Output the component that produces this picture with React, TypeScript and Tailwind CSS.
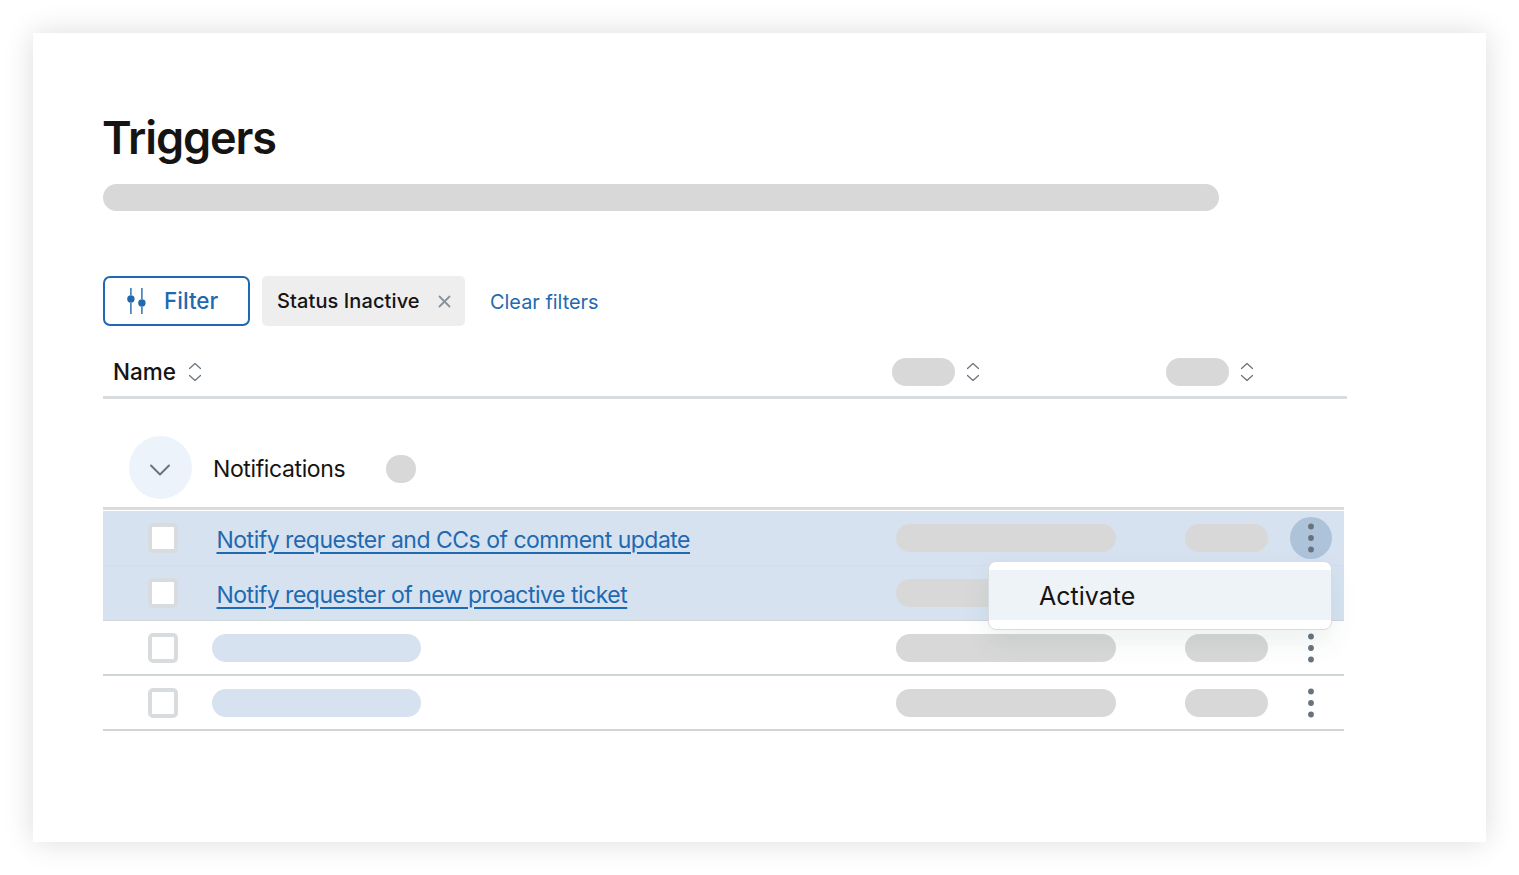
const FONT = "font-['Inter','Liberation_Sans',sans-serif]";

function Sort() {
  return (
    <svg width="16" height="22" viewBox="0 0 16 22" fill="none" stroke="#68737d" strokeWidth="1.2" strokeLinecap="round" strokeLinejoin="round">
      <path d="M2.5 7.5 8 2.5l5.5 5" />
      <path d="M2.5 14.5 8 19.5l5.5-5" />
    </svg>
  );
}

function Pill({ className }: { className: string }) {
  return <div className={`h-[28px] rounded-full bg-[#d8d8d8] ${className}`} />;
}

function Dots() {
  return (
    <svg width="8" height="30" viewBox="0 0 8 30" fill="#68737d">
      <circle cx="4" cy="3.5" r="2.9" />
      <circle cx="4" cy="15" r="2.9" />
      <circle cx="4" cy="26.5" r="2.9" />
    </svg>
  );
}

function Check() {
  return <div className="ml-[45px] h-[30px] w-[30px] shrink-0 rounded-[5px] border-4 border-[#d8dcde] bg-white" />;
}

function Row({ label, selected, active, last }: { label?: string; selected?: boolean; active?: boolean; last?: boolean }) {
  return (
    <div className={`flex h-[55px] items-center border-b ${selected ? "bg-[#d6e2f0]" : "bg-white"} ${selected && !last ? "border-[#d8dcde]" : "border-[#d0d5d8]"} ${!selected ? "border-b-2" : ""}`}>
      <Check />
      {label ? (
        <a className="ml-[39px] mt-[3px] w-[679px] -translate-x-[0.5px] text-[23px] leading-[30px] tracking-[-0.5px] text-[#1f69b0] underline decoration-[2px] underline-offset-[4px]">{label}</a>
      ) : (
        <div className="ml-[34px] w-[684px]">
          <div className="h-[28px] w-[209px] rounded-full bg-[#d6e2f0]" />
        </div>
      )}
      <Pill className="w-[220px]" />
      <Pill className="ml-[69px] w-[83px]" />
      <div className={`ml-[22px] flex h-[42px] w-[42px] items-center justify-center rounded-full ${active ? "bg-[#adc3da]" : ""}`}>
        <Dots />
      </div>
    </div>
  );
}

export default function App() {
  return (
    <div className={`${FONT} h-[875px] w-[1519px] overflow-hidden bg-white p-[33px] text-[#161412]`}>
      <div className="h-[809px] w-[1453px] bg-white pl-[70px] pt-[75px] shadow-[0_0_28px_rgba(0,0,0,0.14)]">
        <h1 className="-ml-[1px] h-[60px] text-[45px] font-semibold leading-[60px] tracking-[-1.1px]">Triggers</h1>
        <div className="mt-[16px] h-[27px] w-[1116px] rounded-full bg-[#d8d8d8]" />

        <div className="mt-[65px] flex h-[50px] items-center">
          <button className="flex h-[50px] w-[147px] items-center rounded-[7px] border-2 border-[#1f69b0] pl-[21px] text-[#1f69b0]">
            <svg width="22" height="26" viewBox="0 0 22 26" fill="#1f69b0">
              <rect x="4.2" y="0" width="1.4" height="7" />
              <rect x="4.2" y="15" width="1.4" height="11" />
              <circle cx="4.9" cy="11" r="3.7" />
              <rect x="15.2" y="0" width="1.4" height="11" />
              <rect x="15.2" y="19" width="1.4" height="7" />
              <circle cx="15.9" cy="15" r="3.7" />
            </svg>
            <span className="ml-[16px] mt-[1px] text-[22.5px] font-medium leading-none">Filter</span>
          </button>
          <div className="ml-[12px] flex h-[50px] w-[203px] items-center rounded-[5px] bg-[#eeeeee] pl-[15px]">
            <span className="text-[20px] font-medium leading-none tracking-[0.1px]">Status Inactive</span>
            <svg className="ml-[18px]" width="13" height="13" viewBox="0 0 13 13" stroke="#87929d" strokeWidth="1.8" strokeLinecap="round">
              <path d="M1.5 1.5l10 10M11.5 1.5l-10 10" />
            </svg>
          </div>
          <a className="ml-[25px] mt-[3px] text-[19.9px] leading-none text-[#1f69b0]">Clear filters</a>
        </div>

        <div className="mt-[21px] flex h-[52px] w-[1244px] items-center border-b-[3px] border-[#d8dcde]">
          <div className="flex w-[789px] items-center">
            <span className="ml-[10px] mt-[1px] text-[22.5px] font-medium leading-none">Name</span>
            <div className="ml-[11px]"><Sort /></div>
          </div>
          <div className="flex w-[274px] items-center">
            <div className="h-[28px] w-[63px] rounded-full bg-[#d8d8d8]" />
            <div className="ml-[10px]"><Sort /></div>
          </div>
          <div className="h-[28px] w-[63px] rounded-full bg-[#d8d8d8]" />
          <div className="ml-[10px]"><Sort /></div>
        </div>

        <div className="w-[1241px]">
          <div className="flex h-[111px] items-center border-b-[3px] border-[#d8dcde] pb-[8px] pt-[37px]">
            <div className="ml-[26px] flex h-[63px] w-[63px] items-center justify-center rounded-full bg-[#edf3fa]">
              <svg width="22" height="14" viewBox="0 0 22 14" fill="none" stroke="#68737d" strokeWidth="2" strokeLinecap="round" strokeLinejoin="round" className="mr-[2px] mt-[5px]">
                <path d="M2 2.5l9 9 9-9" />
              </svg>
            </div>
            <span className="ml-[21px] mt-[4px] text-[23px] leading-none tracking-[-0.38px]">Notifications</span>
            <div className="ml-[41px] mt-[3px] h-[28px] w-[30px] rounded-full bg-[#d8d8d8]" />
          </div>

          <div className="relative mt-[1px]">
            <Row label="Notify requester and CCs of comment update" selected active />
            <Row label="Notify requester of new proactive ticket" selected last />
            <Row />
            <Row />
            <div className="absolute left-[885px] top-[50px] h-[69px] w-[344px] rounded-[8px] border border-[#d8dcde] bg-white py-[8px] shadow-[0_12px_28px_rgba(23,73,77,0.08)]">
              <div className="flex h-[50px] items-center bg-[#eef3f8] pl-[50px] pt-[3px] text-[25px] leading-none">Activate</div>
            </div>
          </div>
        </div>
      </div>
    </div>
  );
}
